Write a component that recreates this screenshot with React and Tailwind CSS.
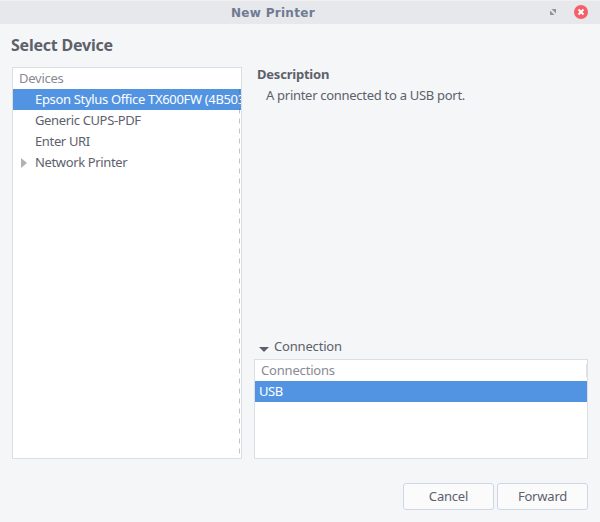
import React from "react";

function TitleBar() {
  return (
    <header className="flex h-6 items-start border-t border-[#eff0f2] bg-[#e7e8eb]">
      <h1 className="mt-px w-[546px] pl-[231px] font-['DejaVu_Sans',sans-serif] text-[12px] leading-[22px] font-bold tracking-[0.3px] text-[#6f7a93]">
        New Printer
      </h1>
      <div className="flex h-[22px] items-center pl-1">
        <svg width="6" height="6" viewBox="0 0 6 6" fill="#90939b">
          <path d="M1.5 0H6V4.5Z" />
          <path d="M0 1.5V6H4.5Z" />
        </svg>
        <svg className="ml-[18px]" width="14" height="14" viewBox="0 0 14 14">
          <circle cx="7" cy="7" r="7" fill="#f46067" />
          <path d="M4.5 4.5L9.5 9.5M9.5 4.5L4.5 9.5" stroke="#fff" strokeWidth="2" />
        </svg>
      </div>
    </header>
  );
}

function DevicePanel() {
  return (
    <section className="relative h-[392px] w-[230px] overflow-hidden border border-[#dbdee3] bg-white whitespace-nowrap">
      <div className="h-[21px] pl-1.5 leading-[21px] tracking-[-0.25px] text-[#878a93]">Devices</div>
      <ul className="tracking-[-0.36px]">
        <li className="h-[21px] bg-[#5294e2] pl-[22px] tracking-[-0.33px] text-white">
          Epson Stylus Office TX600FW (4B503
        </li>
        <li className="h-[21px] pl-[22px]">Generic CUPS-PDF</li>
        <li className="h-[21px] pl-[22px]">Enter URI</li>
        <li className="flex h-[21px] items-center pl-2">
          <svg className="mr-2" width="6" height="10" viewBox="0 0 6 10" fill="#b0b2b8">
            <path d="M0 0L6 5L0 10Z" />
          </svg>
          Network Printer
        </li>
      </ul>
      <svg className="absolute top-[21px] right-[1px]" width="1" height="366">
        <path d="M.5 0V366" stroke="#5c616c" strokeOpacity=".38" strokeDasharray="5 5" strokeDashoffset="0.5" />
      </svg>
    </section>
  );
}

function ConnectionPanel() {
  return (
    <section className="h-[100px] border border-[#dbdee3] bg-white">
      <div className="flex h-[21px] items-center justify-between pl-1.5 tracking-[-0.18px] text-[#878a93]">
        Connections
        <span className="h-[13px] w-px bg-[#dfe1e4]" />
      </div>
      <div className="h-[21px] bg-[#5294e2] pl-1 tracking-[-0.4px] text-white">USB</div>
    </section>
  );
}

function Button({ children }) {
  return (
    <button className="h-[27px] w-[91px] rounded-[3px] border border-[#cfd6e6] bg-[#fbfbfc] leading-[25px] tracking-[-0.2px]">
      {children}
    </button>
  );
}

export default function App() {
  return (
    <div className="h-[522px] w-[600px] overflow-hidden bg-[#f5f6f7] font-['Noto_Sans',sans-serif] text-[13px] leading-[21px] text-[#5c616c]">
      <TitleBar />
      <main className="px-3">
        <h2 className="-ml-px h-[43px] pt-[9px] text-[16px] leading-6 font-bold tracking-[-0.22px]">Select Device</h2>
        <div className="flex gap-3">
          <DevicePanel />
          <div className="flex h-[392px] w-[334px] flex-col">
            <h3 className="mt-[-3px] pl-[3px] font-bold tracking-[-0.22px]">Description</h3>
            <p className="pl-3 tracking-[-0.29px]">A printer connected to a USB port.</p>
            <div className="mt-auto flex h-[23px] items-start pl-[5px] tracking-[-0.18px]">
              <svg className="mt-[11px] mr-[5px]" width="10" height="5" viewBox="0 0 10 5" fill="#5c616c">
                <path d="M0 0H10L5 5Z" />
              </svg>
              Connection
            </div>
            <ConnectionPanel />
          </div>
        </div>
        <div className="mt-6 flex justify-end gap-[3px]">
          <Button>Cancel</Button>
          <Button>Forward</Button>
        </div>
      </main>
    </div>
  );
}
